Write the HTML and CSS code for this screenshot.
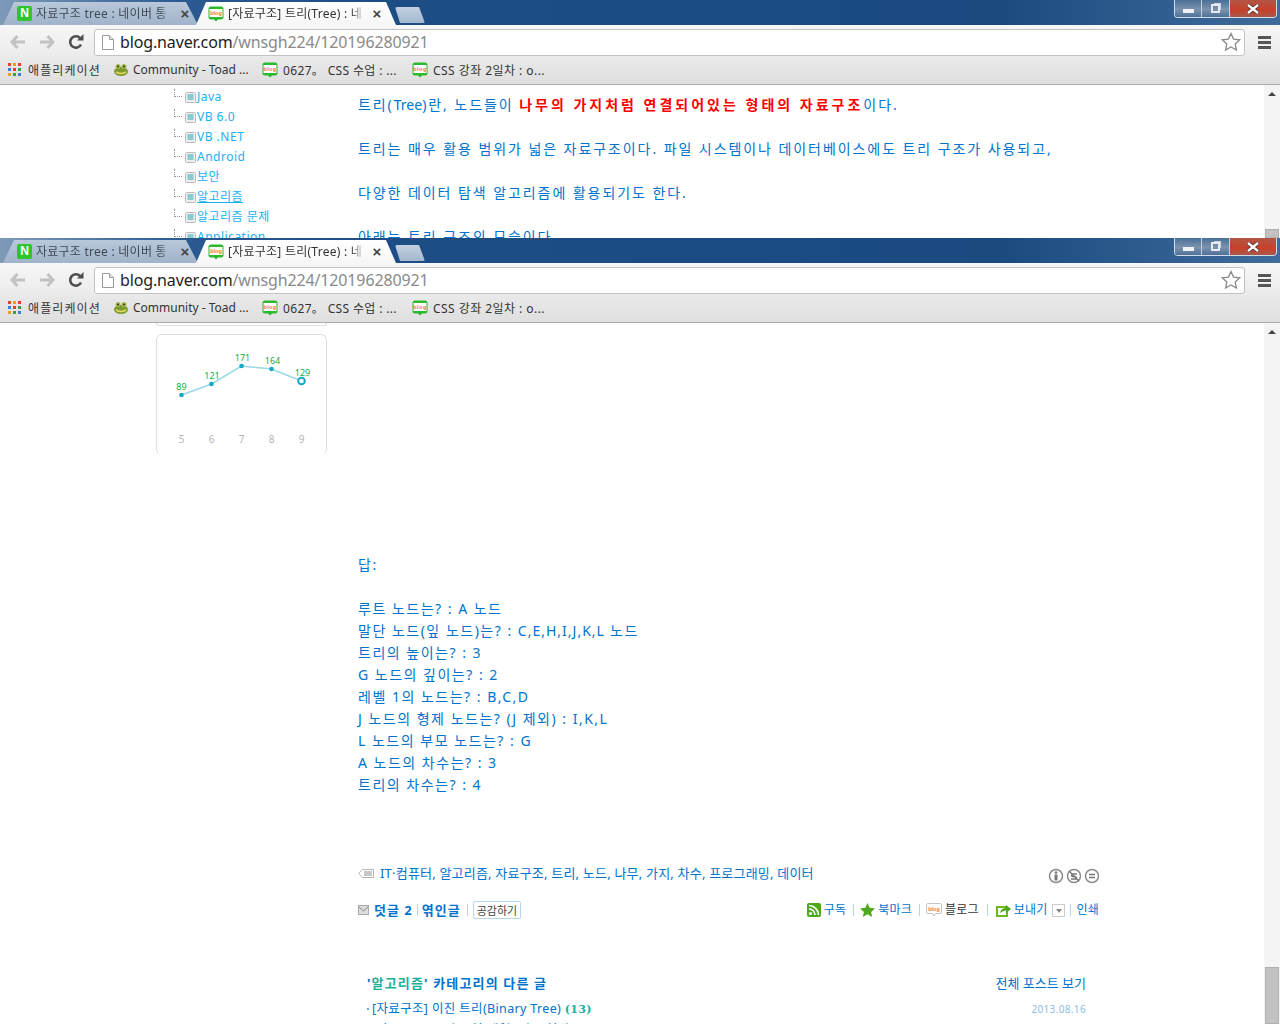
FILE: index.html
```html
<!DOCTYPE html>
<html lang="ko">
<head>
  <meta charset="UTF-8">
  <link rel="stylesheet" href="styles.css">
  <title>자료구조 트리</title>
</head>
<body>

  <svg class="sprite" width="0" height="0">
    <symbol id="ico-blog" viewBox="0 0 16 16">
      <path d="M3 .5h10a2.500 2.500 0 0 1 2.500 2.500v8a2.500 2.500 0 0 1-2.500 2.500h-3l-2 2-2-2H3A2.500 2.500 0 0 1 .5 11V3A2.500 2.500 0 0 1 3 .5z" fill="#2db92d"/>
      <rect x="1.500" y="3" width="13" height="8" fill="#fff"/>
      <text x="8" y="9" font-size="5.500" font-weight="700" text-anchor="middle" fill="#f07814" font-family="Liberation Sans">blog</text>
    </symbol>
    <symbol id="ico-apps" viewBox="0 0 13 13">
      <rect x="0" y="0" width="3" height="3" fill="#e0402c"/><rect x="5" y="0" width="3" height="3" fill="#e8a020"/><rect x="10" y="0" width="3" height="3" fill="#e0402c"/>
      <rect x="0" y="5" width="3" height="3" fill="#3a7ee0"/><rect x="5" y="5" width="3" height="3" fill="#e0402c"/><rect x="10" y="5" width="3" height="3" fill="#38a048"/>
      <rect x="0" y="10" width="3" height="3" fill="#e8a020"/><rect x="5" y="10" width="3" height="3" fill="#38a048"/><rect x="10" y="10" width="3" height="3" fill="#3a7ee0"/>
    </symbol>
    <symbol id="ico-toad" viewBox="0 0 16 14">
      <ellipse cx="8" cy="8.500" rx="7" ry="4.500" fill="#7c9a2e"/>
      <circle cx="5" cy="3.500" r="2.500" fill="#a6b84a"/><circle cx="11" cy="3.500" r="2.500" fill="#a6b84a"/>
      <circle cx="5" cy="3.500" r="1" fill="#333"/><circle cx="11" cy="3.500" r="1" fill="#333"/>
      <path d="M3 9q5 3 10 0" stroke="#e4d860" stroke-width="1.500" fill="none"/>
    </symbol>
    <symbol id="ico-back" viewBox="0 0 16 14">
      <path d="M7.500 1 2 7l5.500 6M2.500 7H15" fill="none" stroke="currentColor" stroke-width="3"/>
    </symbol>
    <symbol id="ico-forward" viewBox="0 0 16 14">
      <path d="M8.500 1 14 7l-5.500 6M13.500 7H1" fill="none" stroke="currentColor" stroke-width="3"/>
    </symbol>
    <symbol id="ico-reload" viewBox="0 0 16 16">
      <path d="M13 10.500A5.700 5.700 0 1 1 12 4" fill="none" stroke="#4d4d4d" stroke-width="2.600"/>
      <path d="M9 6.500h6.500V0z" fill="#4d4d4d"/>
    </symbol>
    <symbol id="ico-page" viewBox="0 0 12 15">
      <path d="M.5.500h7l4 4v10H.5z" fill="#fff" stroke="#9a9a9a"/><path d="M7.500.500v4h4" fill="#e4e4e4" stroke="#9a9a9a"/>
    </symbol>
    <symbol id="ico-star" viewBox="0 0 20 20">
      <path d="m10 1.500 2.600 5.600 6.100.700-4.500 4.200 1.200 6-5.400-3-5.400 3 1.200-6-4.500-4.200 6.100-.700z" fill="#fff" stroke="#8a8a8a" stroke-width="1.300"/>
    </symbol>
    <symbol id="ico-doc" viewBox="0 0 11 11">
      <rect x=".5" y=".5" width="10" height="10" rx="1" fill="#eee" stroke="#bbb"/>
      <path d="M2.500 3h6M2.500 5h6M2.500 7h6" stroke="#22aab4"/>
    </symbol>
    <symbol id="ico-close" viewBox="0 0 14 10">
      <path d="M2 1l10 8M12 1 2 9" stroke="#4a2a24" stroke-width="4"/>
      <path d="M2 1l10 8M12 1 2 9" stroke="#fff" stroke-width="2.400"/>
    </symbol>
  </svg>

  <div class="win win-one">
    <div class="tabstrip">
      <div class="tab tab-back">
        <span class="fav-n">N</span>
        <span class="tab-title">자료구조 tree : 네이버 통</span>
        <span class="tab-close">×</span>
      </div>
      <div class="tab tab-front">
        <svg class="fav"><use href="#ico-blog"/></svg>
        <span class="tab-title">[자료구조] 트리(Tree) : 네</span>
        <span class="tab-close">×</span>
      </div>
      <div class="tab-new"></div>
      <div class="winbtns">
        <span class="winbtn winbtn-min"><i></i></span>
        <span class="winbtn winbtn-max"><i></i></span>
        <span class="winbtn winbtn-close"><svg width="14" height="10"><use href="#ico-close"/></svg></span>
      </div>
    </div>
    <div class="toolbar">
      <span class="navbtn navbtn-off"><svg width="16" height="14"><use href="#ico-back"/></svg></span>
      <span class="navbtn navbtn-off"><svg width="16" height="14"><use href="#ico-forward"/></svg></span>
      <span class="navbtn"><svg width="16" height="16"><use href="#ico-reload"/></svg></span>
      <div class="omnibox">
        <svg class="page-ico" width="12" height="15"><use href="#ico-page"/></svg>
        <span class="url">blog.naver.com<span class="url-path">/wnsgh224/120196280921</span></span>
        <svg class="star" width="20" height="20"><use href="#ico-star"/></svg>
      </div>
      <span class="menu"><i></i><i></i><i></i></span>
    </div>
    <div class="bookmarks">
      <span class="bm bm-apps"><svg width="13" height="13"><use href="#ico-apps"/></svg>애플리케이션</span>
      <span class="bm bm-toad"><svg width="16" height="14"><use href="#ico-toad"/></svg>Community - Toad ...</span>
      <span class="bm bm-a"><svg width="16" height="16"><use href="#ico-blog"/></svg>0627。 CSS 수업 : ...</span>
      <span class="bm bm-b"><svg width="16" height="16"><use href="#ico-blog"/></svg>CSS 강좌 2일차 : o...</span>
    </div>
    <div class="page">
      <div class="content content-one">
        <ul class="tree">
          <li><svg width="11" height="11"><use href="#ico-doc"/></svg>Java</li>
          <li><svg width="11" height="11"><use href="#ico-doc"/></svg>VB 6.0</li>
          <li><svg width="11" height="11"><use href="#ico-doc"/></svg>VB .NET</li>
          <li><svg width="11" height="11"><use href="#ico-doc"/></svg>Android</li>
          <li><svg width="11" height="11"><use href="#ico-doc"/></svg>보안</li>
          <li><svg width="11" height="11"><use href="#ico-doc"/></svg><u>알고리즘</u></li>
          <li><svg width="11" height="11"><use href="#ico-doc"/></svg>알고리즘 문제</li>
          <li><svg width="11" height="11"><use href="#ico-doc"/></svg>Application</li>
        </ul>
        <div class="post">
          <p>트리(<span class="lat">Tree</span>)란, 노드들이 <b class="hl">나무의 가지처럼 연결되어있는 형태의 자료구조</b>이다.</p>
          <p>&nbsp;</p>
          <p>트리는 매우 활용 범위가 넓은 자료구조이다. 파일 시스템이나 데이터베이스에도 트리 구조가 사용되고,</p>
          <p>&nbsp;</p>
          <p>다양한 데이터 탐색 알고리즘에 활용되기도 한다.</p>
          <p>&nbsp;</p>
          <p>아래는 트리 구조의 모습이다.</p>
        </div>
      </div>
      <div class="scrollbar">
        <span class="scroll-up"></span>
        <span class="thumb thumb-one"></span>
      </div>
    </div>
  </div>

  <div class="win win-two">
    <div class="tabstrip">
      <div class="tab tab-back">
        <span class="fav-n">N</span>
        <span class="tab-title">자료구조 tree : 네이버 통</span>
        <span class="tab-close">×</span>
      </div>
      <div class="tab tab-front">
        <svg class="fav"><use href="#ico-blog"/></svg>
        <span class="tab-title">[자료구조] 트리(Tree) : 네</span>
        <span class="tab-close">×</span>
      </div>
      <div class="tab-new"></div>
      <div class="winbtns">
        <span class="winbtn winbtn-min"><i></i></span>
        <span class="winbtn winbtn-max"><i></i></span>
        <span class="winbtn winbtn-close"><svg width="14" height="10"><use href="#ico-close"/></svg></span>
      </div>
    </div>
    <div class="toolbar">
      <span class="navbtn navbtn-off"><svg width="16" height="14"><use href="#ico-back"/></svg></span>
      <span class="navbtn navbtn-off"><svg width="16" height="14"><use href="#ico-forward"/></svg></span>
      <span class="navbtn"><svg width="16" height="16"><use href="#ico-reload"/></svg></span>
      <div class="omnibox">
        <svg class="page-ico" width="12" height="15"><use href="#ico-page"/></svg>
        <span class="url">blog.naver.com<span class="url-path">/wnsgh224/120196280921</span></span>
        <svg class="star" width="20" height="20"><use href="#ico-star"/></svg>
      </div>
      <span class="menu"><i></i><i></i><i></i></span>
    </div>
    <div class="bookmarks">
      <span class="bm bm-apps"><svg width="13" height="13"><use href="#ico-apps"/></svg>애플리케이션</span>
      <span class="bm bm-toad"><svg width="16" height="14"><use href="#ico-toad"/></svg>Community - Toad ...</span>
      <span class="bm bm-a"><svg width="16" height="16"><use href="#ico-blog"/></svg>0627。 CSS 수업 : ...</span>
      <span class="bm bm-b"><svg width="16" height="16"><use href="#ico-blog"/></svg>CSS 강좌 2일차 : o...</span>
    </div>
    <div class="page">
      <div class="content content-two">
        <div class="side">
          <div class="card-prev"></div>
          <div class="card-chart">
            <svg width="171" height="121" viewBox="156 334 171 121">
              <polyline points="181.500,395 211.500,384 241.500,366 271.500,369 301.500,381" fill="none" stroke="#9ad8e6" stroke-width="1.500"/>
              <g fill="#14a8c4">
                <circle cx="181.500" cy="395" r="2.300"/>
                <circle cx="211.500" cy="384" r="2.300"/>
                <circle cx="241.500" cy="366" r="2.300"/>
                <circle cx="271.500" cy="369" r="2.300"/>
              </g>
              <circle cx="301.500" cy="381" r="3.300" fill="#fff" stroke="#14a8c4" stroke-width="2"/>
              <g class="chart-val" text-anchor="middle">
                <text x="181.500" y="390">89</text>
                <text x="212" y="379">121</text>
                <text x="242.500" y="361">171</text>
                <text x="272.500" y="364">164</text>
                <text x="302.500" y="376">129</text>
              </g>
              <g class="chart-axis" text-anchor="middle">
                <text x="181.500" y="443">5</text>
                <text x="211.500" y="443">6</text>
                <text x="241.500" y="443">7</text>
                <text x="271.500" y="443">8</text>
                <text x="301.500" y="443">9</text>
              </g>
            </svg>
          </div>
        </div>
        <div class="post post-two">
          <p>답:</p>
          <p>&nbsp;</p>
          <p>루트 노드는? : A 노드</p>
          <p>말단 노드(잎 노드)는? : <span class="lat-list">C,E,H,I,J,K,L</span> 노드</p>
          <p>트리의 높이는? : 3</p>
          <p>G 노드의 깊이는? : 2</p>
          <p>레벨 1의 노드는? : B,C,D</p>
          <p>J 노드의 형제 노드는? (J 제외) : I,K,L</p>
          <p>L 노드의 부모 노드는? : G</p>
          <p>A 노드의 차수는? : 3</p>
          <p>트리의 차수는? : 4</p>

          <div class="tags">
            <svg class="tag-ico" width="16" height="9" viewBox="0 0 16 9">
              <path d="M.5 4.500 4.500.5h11v8h-11z" fill="#fff" stroke="#b4b4b4"/>
              <rect x="6" y="2" width="8" height="5" fill="#c8c8c8"/>
            </svg>
            <span class="tag-text">IT·컴퓨터, 알고리즘, 자료구조, 트리, 노드, 나무, 가지, 차수, 프로그래밍, 데이터</span>
            <span class="cc">
              <svg width="16" height="16" viewBox="0 0 16 16"><circle cx="8" cy="8" r="6.500" fill="#fff" stroke="#8c8c8c" stroke-width="1.500"/><circle cx="8" cy="4.600" r="1.300" fill="#777"/><rect x="6.500" y="6.500" width="3" height="6" fill="#777"/></svg>
              <svg width="16" height="16" viewBox="0 0 16 16"><circle cx="8" cy="8" r="6.500" fill="#fff" stroke="#8c8c8c" stroke-width="1.500"/><path d="M11 6H6.500a1.300 1.300 0 0 0 0 2.500h3a1.300 1.300 0 0 1 0 2.500H5M3 3l10 10" fill="none" stroke="#777" stroke-width="1.300"/></svg>
              <svg width="16" height="16" viewBox="0 0 16 16"><circle cx="8" cy="8" r="6.500" fill="#fff" stroke="#8c8c8c" stroke-width="1.500"/><path d="M5 6.500h6M5 9.500h6" stroke="#777" stroke-width="1.500"/></svg>
            </span>
          </div>

          <div class="actions">
            <div class="act-left">
              <svg class="mail-ico" width="11" height="10" viewBox="0 0 11 10"><rect x=".5" y=".5" width="10" height="9" fill="#ddd" stroke="#aaa"/><path d="m1 2 4.500 4L10 2" fill="none" stroke="#888"/></svg>
              <b class="act-bold">덧글 2</b>
              <span class="act-sep act-sep-small"></span>
              <b class="act-bold">엮인글</b>
              <span class="act-sep act-sep-gray"></span>
              <span class="like">공감하기</span>
            </div>
            <div class="act-right">
              <svg width="14" height="14" viewBox="0 0 14 14"><rect width="14" height="14" rx="2" fill="#4fa81e"/><circle cx="3.500" cy="10.500" r="1.600" fill="#fff"/><path d="M2 6a6 6 0 0 1 6 6M2 2.500A9.500 9.500 0 0 1 11.500 12" fill="none" stroke="#fff" stroke-width="1.700"/></svg>
              <span class="act-link">구독</span>
              <span class="act-sep"></span>
              <svg width="15" height="14" viewBox="0 0 15 14"><path d="m7.500 0 2.200 4.800 5.300.6-3.900 3.500 1.100 5.100-4.700-2.700L2.800 14l1.100-5.100L0 5.400l5.300-.6z" fill="#4fa81e"/></svg>
              <span class="act-link">북마크</span>
              <span class="act-sep"></span>
              <svg width="16" height="16" viewBox="0 0 16 16"><path d="M2 1.500h12a1.500 1.500 0 0 1 1.500 1.500v7a1.500 1.500 0 0 1-1.500 1.500H9.500L8 14l-1.500-2.500H2A1.500 1.500 0 0 1 .5 10V3A1.500 1.500 0 0 1 2 1.500z" fill="#fff" stroke="#c4c4c4"/><text x="8" y="8.500" font-size="5.500" font-weight="700" text-anchor="middle" fill="#f07814" font-family="Liberation Sans">blog</text></svg>
              <span class="act-link act-dark">블로그</span>
              <span class="act-sep act-sep-wide"></span>
              <svg width="15" height="14" viewBox="0 0 15 14"><rect y="3" width="12" height="11" fill="#6cb81e"/><rect x="2" y="5" width="8" height="7" fill="#fff"/><path d="M4 10q1-5 6-5V2l5 4-5 4V7.500q-3 0-6 2.500z" fill="#4fa81e"/></svg>
              <span class="act-link">보내기</span>
              <span class="drop"></span>
              <span class="act-sep act-sep-tight"></span>
              <span class="act-link">인쇄</span>
            </div>
          </div>

          <div class="related">
            <div class="related-head">
              <b>'<span class="teal">알고리즘</span>' 카테고리의 다른 글</b>
              <span class="related-all">전체 포스트 보기</span>
            </div>
            <div class="related-row">
              <span><i class="dot"></i>[자료구조] 이진 트리(Binary Tree) <b class="count">(13)</b></span>
              <span class="date">2013.08.16</span>
            </div>
            <div class="related-row">
              <span><i class="dot"></i>[자료구조] 트리 구현(배열) 및 구현법</span>
              <span class="date">2013.08.16</span>
            </div>
          </div>
        </div>
      </div>
      <div class="scrollbar">
        <span class="scroll-up"></span>
        <span class="thumb thumb-two"></span>
      </div>
    </div>
  </div>

</body>
</html>
```

FILE: styles.css
```css
* {
  box-sizing: border-box;
}

body {
  margin: 0;
  width: 1280px;
  height: 1024px;
  overflow: hidden;
  background: #fff;
  font-family: "Noto Sans", "Noto Sans CJK KR", sans-serif;
}

.sprite {
  display: block;
  position: absolute;
}

.win {
  display: flex;
  flex-direction: column;
  overflow: hidden;
}

.win-one {
  height: 238px;
}

.win-two {
  height: 786px;
}

/* tabs */
.tabstrip {
  position: relative;
  flex: none;
  display: flex;
  height: 25px;
  padding-top: 2px;
  background: linear-gradient(90deg, #7f9ab8 0, #2a5a90 14%, #1c4d85 30%, #1a4a80 78%, #3f6c9c 100%);
}

.tab {
  display: flex;
  align-items: center;
  height: 23px;
  font-size: 12px;
  color: #333;
}

.tab-back {
  width: 201px;
  padding: 0 9px 0 17px;
  background: linear-gradient(#b9c8da, #a0b3ca);
  clip-path: polygon(3px 100%, 14px 0, 186px 0, 198px 100%);
  color: #3f4955;
}

.tab-front {
  position: relative;
  width: 200px;
  margin-left: -5px;
  padding: 0 12px 0 12px;
  background: linear-gradient(#fff, #f6f6f6);
  clip-path: polygon(0 100%, 10px 0, 190px 0, 200px 100%);
}

.fav-n {
  flex: none;
  width: 15px;
  height: 15px;
  border-radius: 2px;
  background: #2fc52f;
  color: #fff;
  font: 700 12px/15px "Liberation Sans", sans-serif;
  text-align: center;
}

.fav {
  flex: none;
  width: 16px;
  height: 16px;
}

.tab-title {
  flex: 1;
  margin-left: 4px;
  overflow: hidden;
  white-space: nowrap;
  line-height: 16px;
  letter-spacing: .25px;
  -webkit-mask-image: linear-gradient(90deg, #000 90%, transparent);
  mask-image: linear-gradient(90deg, #000 90%, transparent);
}

.tab-close {
  flex: none;
  width: 14px;
  margin-left: 5px;
  font: 700 15px/14px "Liberation Sans", sans-serif;
  text-align: center;
  color: #444;
}

.tab-new {
  width: 30px;
  height: 16px;
  margin: 5px 0 0 -1px;
  background: linear-gradient(#c3d0e0, #a4b8cf);
  border-radius: 2px;
  clip-path: polygon(0 0, 24px 0, 100% 100%, 5px 100%);
}

.winbtns {
  position: absolute;
  top: 0;
  right: 3px;
  display: flex;
  height: 18px;
  border: 1px solid #d0dce8;
  border-top: 0;
  border-radius: 0 0 4px 4px;
  overflow: hidden;
}

.winbtn {
  display: flex;
  align-items: center;
  justify-content: center;
  height: 100%;
  border-right: 1px solid #c4d0dc;
  background: linear-gradient(#4a6f96, #7b93ae 55%, #4f7199);
}

.winbtn-min {
  width: 27px;
}

.winbtn-min i {
  display: block;
  width: 11px;
  height: 4px;
  margin-top: 4px;
  background: #eef2f6;
}

.winbtn-max {
  width: 28px;
}

.winbtn-max i {
  display: block;
  width: 9px;
  height: 9px;
  border: 2px solid #e4eaf0;
  box-shadow: 2px -2px 0 -1px #c8d4e0;
}

.winbtn-close {
  width: 46px;
  border-right: 0;
  background: linear-gradient(#b25645, #c8402a 60%, #a85a4c);
}

/* toolbar */
.toolbar {
  flex: none;
  display: flex;
  align-items: center;
  height: 32px;
  padding: 2px 0 0 3px;
  background: linear-gradient(#f7f7f7, #ebebeb);
}

.navbtn {
  flex: none;
  display: flex;
  align-items: center;
  justify-content: center;
  width: 29px;
  color: #4d4d4d;
}

.navbtn-off {
  color: #c2c2c2;
}

.omnibox {
  flex: 1;
  display: flex;
  align-items: center;
  height: 27px;
  margin-left: 4px;
  padding: 0 3px 0 7px;
  background: #fff;
  border: 1px solid #c2c2c2;
  border-radius: 3px;
}

.page-ico {
  flex: none;
}

.url {
  flex: 1;
  margin-left: 6px;
  font-size: 16px;
  letter-spacing: -.14px;
  color: #222;
  white-space: nowrap;
}

.url-path {
  color: #8a8a8a;
}

.star {
  flex: none;
}

.menu {
  flex: none;
  display: flex;
  flex-direction: column;
  gap: 2px;
  width: 35px;
  padding-left: 13px;
}

.menu i {
  display: block;
  width: 13px;
  height: 3px;
  background: #555;
}

/* bookmarks */
.bookmarks {
  flex: none;
  display: flex;
  align-items: center;
  height: 28px;
  padding-bottom: 2px;
  background: linear-gradient(#e9e9e9, #dfdfdf);
  border-bottom: 1px solid #ababab;
  font-size: 12px;
  color: #333;
}

.bm {
  display: flex;
  align-items: center;
  flex: none;
  white-space: nowrap;
}

.bm-apps {
  width: 105px;
  margin-left: 8px;
  gap: 7px;
  letter-spacing: 1.1px;
}

.bm-toad {
  width: 149px;
  gap: 4px;
}

.bm-a {
  width: 150px;
  gap: 5px;
  letter-spacing: .35px;
}

.bm-b {
  gap: 5px;
  letter-spacing: .45px;
}

/* page */
.page {
  flex: 1;
  display: flex;
  min-height: 0;
  background: #fff;
}

.content {
  flex: 1;
  display: flex;
  min-width: 0;
  overflow: hidden;
}

.content-one {
  padding-left: 174px;
}

.content-two {
  padding-left: 156px;
}

.tree {
  flex: none;
  width: 184px;
  margin: 2px 0 0;
  padding: 0;
  list-style: none;
  font-size: 12px;
  line-height: 20px;
  letter-spacing: .5px;
  color: #18b2f2;
}

.tree li {
  display: flex;
  align-items: center;
  height: 20px;
}

.tree li::before {
  content: "";
  flex: none;
  width: 7px;
  height: 7px;
  margin: 0 3px 9px 0;
  border-left: 1px dotted #999;
  border-bottom: 1px dotted #999;
}

.tree li svg {
  flex: none;
  margin-right: 1px;
}

.post {
  flex: none;
  width: 742px;
  padding-top: 9px;
  font-size: 14px;
  line-height: 22px;
  color: #0073cc;
}

.post p {
  margin: 0;
  white-space: nowrap;
  letter-spacing: 1.93px;
}

.lat {
  letter-spacing: 0;
}

.post .hl {
  color: #f00;
  letter-spacing: 3px;
}

.side {
  flex: none;
  width: 171px;
  margin-right: 31px;
}

.card-prev {
  height: 3px;
  border: 1px solid #e0dfd6;
  border-top: 0;
  border-radius: 0 0 5px 5px;
}

.card-chart {
  height: 121px;
  margin-top: 8px;
  border: 1px solid #e0dfd6;
  border-bottom: 0;
  border-radius: 6px;
  overflow: hidden;
}

.card-chart svg {
  display: block;
  margin: -1px;
}

.chart-val {
  font: 9px "Noto Sans", sans-serif;
  fill: #22aa44;
}

.chart-axis {
  font: 10px "Noto Sans", sans-serif;
  fill: #b4b4b4;
}

.post-two {
  padding-top: 231px;
}

.post-two p {
  letter-spacing: 1.5px;
}

.post-two .lat-list {
  letter-spacing: 1px;
}

.tags {
  display: flex;
  align-items: center;
  margin-top: 66px;
  height: 22px;
  font-size: 13px;
}

.tag-ico {
  flex: none;
  margin-right: 6px;
}

.tag-text {
  flex: 1;
  white-space: nowrap;
  letter-spacing: .2px;
}

.cc {
  display: flex;
  gap: 2px;
  margin-top: 6px;
}

.actions {
  display: flex;
  justify-content: space-between;
  align-items: center;
  margin-top: 16px;
  height: 20px;
  font-size: 12px;
}

.act-left,
.act-right {
  display: flex;
  align-items: center;
}

.act-right {
  padding-right: 1px;
}

.mail-ico {
  margin-right: 5px;
}

.act-bold {
  font-size: 13px;
  letter-spacing: 1px;
}

.act-sep {
  width: 1px;
  height: 12px;
  margin: 0 6.5px;
  background: #b5d6ef;
}

.act-sep-small {
  margin: 0 4px;
}

.act-sep-wide {
  margin: 0 8px;
}

.act-sep-gray {
  margin: 0 5px 0 6px;
  background: #ccc;
}

.act-sep-tight {
  margin: 0 3px 0 5px;
}

.like {
  height: 18px;
  padding: 0 3px;
  border: 1px solid #b5d6ef;
  border-radius: 2px;
  font-size: 11px;
  line-height: 17px;
  color: #444;
}

.act-link {
  margin-left: 3px;
  letter-spacing: .2px;
}

.act-dark {
  color: #333;
}

.drop {
  position: relative;
  width: 13px;
  height: 13px;
  margin-left: 4px;
  border: 1px solid #ccc;
}

.drop::after {
  content: "";
  position: absolute;
  top: 4px;
  left: 3px;
  border: 3px solid transparent;
  border-top: 4px solid #888;
  border-bottom: 0;
}

.related {
  margin-top: 52px;
  padding: 0 14px 0 9px;
  font-size: 13px;
}

.related-head,
.related-row {
  display: flex;
  justify-content: space-between;
  align-items: center;
}

.related-head {
  height: 22px;
  margin-bottom: 4px;
}

.related-head b {
  letter-spacing: 1.15px;
}

.related-row {
  height: 21px;
  font-size: 12.500px;
  letter-spacing: .35px;
  white-space: nowrap;
}

.teal {
  color: #1ab09a;
}

.dot {
  display: inline-block;
  width: 2px;
  height: 2px;
  margin: 0 3px 3px 0;
  background: #6fa8dc;
}

.count {
  color: #1ab09a;
  font: 700 11px "DejaVu Serif", serif;
}

.date {
  font-size: 10px;
  color: #8cbde6;
}

/* scrollbar */
.scrollbar {
  flex: none;
  display: flex;
  flex-direction: column;
  align-items: center;
  width: 16px;
  background: #f4f4f4;
}

.scroll-up {
  flex: none;
  margin-top: 7px;
  border: 4px solid transparent;
  border-top: 0;
  border-bottom: 4px solid #444;
}

.thumb {
  width: 14px;
  margin-top: auto;
  background: #c2c2c2;
  border: 1px solid #b0b0b0;
}

.thumb-one {
  height: 9px;
}

.thumb-two {
  height: 57px;
}
```
